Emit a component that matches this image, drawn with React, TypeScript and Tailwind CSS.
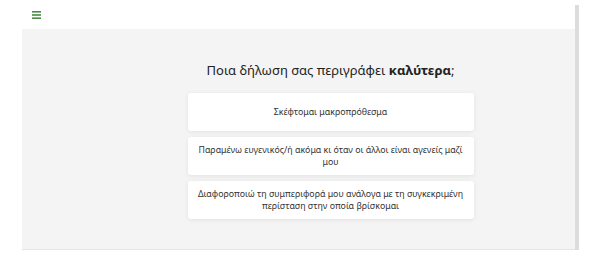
import React from "react";

const options = [
  "Σκέφτομαι μακροπρόθεσμα",
  "Παραμένω ευγενικός/ή ακόμα κι όταν οι άλλοι είναι αγενείς μαζί μου",
  "Διαφοροποιώ τη συμπεριφορά μου ανάλογα με τη συγκεκριμένη περίσταση στην οποία βρίσκομαι",
];

export default function App() {
  return (
    <div
      className="relative w-[611px] h-[276px] bg-white"
      style={{ fontFamily: '"Noto Sans", "Open Sans", sans-serif' }}
    >
      <div className="absolute left-[575px] top-[5px] w-[4px] h-[245px] bg-[#dcdcdc]" />
      <div className="h-[29px] flex items-center pl-[32px]">
        <svg width="9" height="8" viewBox="0 0 9 8">
          <rect x="0" y="0" width="9" height="1.6" fill="#4b8b46" />
          <rect x="0" y="3.2" width="9" height="1.6" fill="#4b8b46" />
          <rect x="0" y="6.4" width="9" height="1.6" fill="#4b8b46" />
        </svg>
      </div>
      <div className="ml-[22px] w-[553px] h-[221px] bg-[#f4f4f4] border-b border-[#e6e6e6] flex flex-col items-center pt-[31px] pl-[64px]">
        <h1 className="text-[13px] leading-[20px] text-[#222] font-normal">
          Ποια δήλωση σας περιγράφει <span className="font-bold">καλύτερα</span>;
        </h1>
        <div className="mt-[13px] flex flex-col gap-[6px]">
          {options.map((o) => (
            <div
              key={o}
              className="w-[286px] h-[38px] bg-white rounded-[3px] shadow-[0_1px_4px_rgba(0,0,0,0.08)] flex items-center justify-center px-[6px] text-center text-[8.8px] leading-[12px] text-[#333]"
            >
              {o}
            </div>
          ))}
        </div>
      </div>
    </div>
  );
}
